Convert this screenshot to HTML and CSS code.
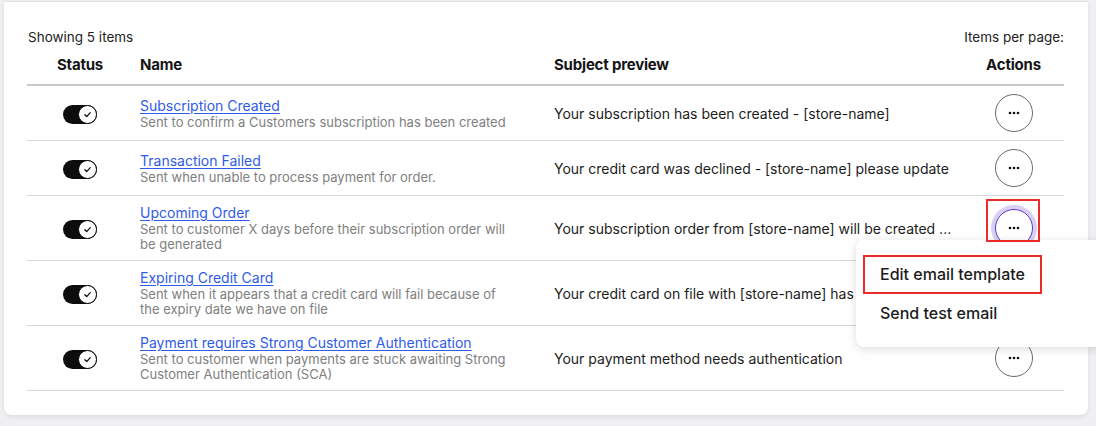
FILE: index.html
```html
<!DOCTYPE html>
<html lang="en">
<head>
    <meta charset="UTF-8">
    <meta name="viewport" content="width=device-width, initial-scale=1.0">
    <title>Email Templates</title>
    <link rel="stylesheet" href="styles.css">
</head>
<body>
    <div class="card">
        <div class="toolbar">
            <span>Showing 5 items</span>
            <span>Items per page:</span>
        </div>

        <table class="emails">
            <colgroup>
                <col class="col-status">
                <col class="col-name">
                <col class="col-subject">
                <col class="col-actions">
            </colgroup>
            <thead>
                <tr>
                    <th class="center">Status</th>
                    <th>Name</th>
                    <th>Subject preview</th>
                    <th class="center">Actions</th>
                </tr>
            </thead>
            <tbody>
                <tr>
                    <td class="center"><span class="toggle"><span class="knob"><svg viewBox="0 0 10 10"><path d="M2.6 5.2l1.7 1.7 3.2-3.6"/></svg></span></span></td>
                    <td>
                        <a href="#" class="tpl-name">Subscription Created</a>
                        <div class="tpl-desc">Sent to confirm a Customers subscription has been created</div>
                    </td>
                    <td class="subject">Your subscription has been created - [store-name]</td>
                    <td class="center"><button class="more"><svg viewBox="0 0 12 4"><circle cx="2" cy="2" r="1.3"/><circle cx="6" cy="2" r="1.3"/><circle cx="10" cy="2" r="1.3"/></svg></button></td>
                </tr>
                <tr>
                    <td class="center"><span class="toggle"><span class="knob"><svg viewBox="0 0 10 10"><path d="M2.6 5.2l1.7 1.7 3.2-3.6"/></svg></span></span></td>
                    <td>
                        <a href="#" class="tpl-name">Transaction Failed</a>
                        <div class="tpl-desc">Sent when unable to process payment for order.</div>
                    </td>
                    <td class="subject">Your credit card was declined - [store-name] please update</td>
                    <td class="center"><button class="more"><svg viewBox="0 0 12 4"><circle cx="2" cy="2" r="1.3"/><circle cx="6" cy="2" r="1.3"/><circle cx="10" cy="2" r="1.3"/></svg></button></td>
                </tr>
                <tr>
                    <td class="center"><span class="toggle"><span class="knob"><svg viewBox="0 0 10 10"><path d="M2.6 5.2l1.7 1.7 3.2-3.6"/></svg></span></span></td>
                    <td>
                        <a href="#" class="tpl-name">Upcoming Order</a>
                        <div class="tpl-desc">Sent to customer X days before their subscription order will be generated</div>
                    </td>
                    <td class="subject">Your subscription order from [store-name] will be created ...</td>
                    <td class="center"><button class="more focused"><svg viewBox="0 0 12 4"><circle cx="2" cy="2" r="1.3"/><circle cx="6" cy="2" r="1.3"/><circle cx="10" cy="2" r="1.3"/></svg></button></td>
                </tr>
                <tr>
                    <td class="center"><span class="toggle"><span class="knob"><svg viewBox="0 0 10 10"><path d="M2.6 5.2l1.7 1.7 3.2-3.6"/></svg></span></span></td>
                    <td>
                        <a href="#" class="tpl-name">Expiring Credit Card</a>
                        <div class="tpl-desc">Sent when it appears that a credit card will fail because of the expiry date we have on file</div>
                    </td>
                    <td class="subject">Your credit card on file with [store-name] has expired</td>
                    <td class="center"><button class="more"><svg viewBox="0 0 12 4"><circle cx="2" cy="2" r="1.3"/><circle cx="6" cy="2" r="1.3"/><circle cx="10" cy="2" r="1.3"/></svg></button></td>
                </tr>
                <tr>
                    <td class="center"><span class="toggle"><span class="knob"><svg viewBox="0 0 10 10"><path d="M2.6 5.2l1.7 1.7 3.2-3.6"/></svg></span></span></td>
                    <td>
                        <a href="#" class="tpl-name">Payment requires Strong Customer Authentication</a>
                        <div class="tpl-desc">Sent to customer when payments are stuck awaiting Strong Customer Authentication (SCA)</div>
                    </td>
                    <td class="subject">Your payment method needs authentication</td>
                    <td class="center"><button class="more"><svg viewBox="0 0 12 4"><circle cx="2" cy="2" r="1.3"/><circle cx="6" cy="2" r="1.3"/><circle cx="10" cy="2" r="1.3"/></svg></button></td>
                </tr>
            </tbody>
        </table>

        <!-- menu opened from the third row -->
        <div class="menu">
            <div class="menu-item marked">Edit email template</div>
            <div class="menu-item">Send test email</div>
        </div>
        <div class="mark-button"></div>
    </div>
</body>
</html>
```

FILE: styles.css
```css
html, body { margin: 0; height: 100%; overflow: hidden; }
body { background: #f0f0f2; font-family: Inter, "Noto Sans", Arial, sans-serif; color: #1f1f1f; }

.card { position: relative; width: 1084px; margin: 1px 0 0 4px; padding: 26px 24px 24px 23px; box-sizing: border-box; background: #fff; border-top: 1px solid #e3e3e5; border-radius: 0 0 8px 8px; box-shadow: 0 2px 4px rgba(0, 0, 0, 0.08); }

.toolbar { display: flex; justify-content: space-between; font-size: 13.5px; line-height: 18px; padding-left: 1px; color: #222; }

.emails { width: 100%; table-layout: fixed; border-collapse: collapse; margin-top: 9px; }
.col-status { width: 106px; }
.col-name { width: 414px; }
.col-subject { width: 416px; }
.col-actions { width: 101px; }

.emails th { text-align: left; font-size: 15px; font-weight: 700; letter-spacing: -0.2px; color: #151515; padding: 0 7px 9px; line-height: 20px; border-bottom: 2px solid #c8c8cc; }
.emails td { padding: 8px 7px; vertical-align: middle; border-bottom: 1px solid #d6d6d8; }
.emails .center { text-align: center; padding-left: 0; padding-right: 0; }

.tpl-name { display: block; width: max-content; font-size: 14px; line-height: 18px; color: #2f5bea; text-decoration: underline; text-underline-offset: 2px; }
.tpl-desc { font-size: 13px; line-height: 15px; color: #808080; max-width: 372px; }
.subject { font-size: 14px; color: #1c1c1c; white-space: nowrap; overflow: hidden; }

.toggle { display: inline-flex; justify-content: flex-end; align-items: center; width: 34px; height: 19px; border-radius: 10px; background: #0d0d0d; vertical-align: middle; }
.knob { display: flex; align-items: center; justify-content: center; width: 17px; height: 17px; border-radius: 50%; background: #fff; border: 1px solid #0d0d0d; }
.knob svg { width: 11px; height: 11px; fill: none; stroke: #111; stroke-width: 1.2; stroke-linecap: round; stroke-linejoin: round; }

.more { display: inline-flex; align-items: center; justify-content: center; width: 38px; height: 38px; padding: 0; border-radius: 50%; border: 1px solid #6b6b6b; background: #fff; vertical-align: middle; }
.more svg { width: 12px; height: 4px; fill: #111; }
.more.focused { border-color: #5a3cc9; box-shadow: 0 0 0 4px #d9d0f1; }

.menu { position: absolute; left: 852px; top: 238px; width: 260px; padding: 15px 0; background: #fff; border-radius: 8px; box-shadow: 0 2px 10px rgba(0, 0, 0, 0.14); }
.menu-item { font-size: 16px; font-weight: 500; line-height: 38px; padding-left: 24px; color: #1c1c1c; }
.menu-item.marked { display: inline-block; margin-left: 7px; padding: 0 15px; line-height: 35px; border: 2px solid #ec2a2a; }

.mark-button { position: absolute; left: 982px; top: 197px; width: 50px; height: 39px; border: 2px solid #ec2a2a; }
```
